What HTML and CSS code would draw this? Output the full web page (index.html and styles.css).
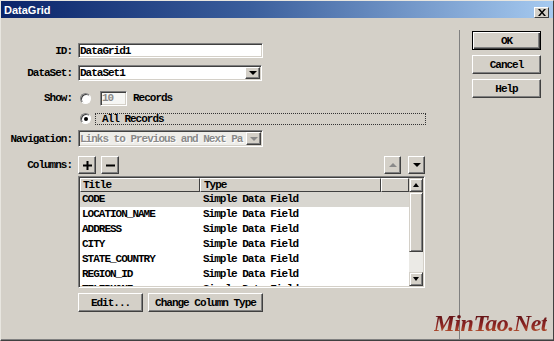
FILE: index.html
```html
<!DOCTYPE html>
<html lang="en">
<head>
  <meta charset="UTF-8" />
  <meta name="viewport" content="width=device-width, initial-scale=1.0" />
  <title>DataGrid</title>
  <link rel="stylesheet" href="styles.css">
</head>
<body>
  <div class="window">
    <div class="titlebar">
      <span class="title">DataGrid</span>
      <span class="close">
        <svg width="8" height="7" viewBox="0 0 8 7"><path d="M0 0h2l2 2.4 2-2.4h2l-3 3.5 3 3.5h-2l-2-2.4-2 2.4h-2l3-3.5z" fill="#000"/></svg>
      </span>
    </div>

    <div class="content">
      <div class="form">
        <div class="row row-id">
          <span class="lbl">ID:</span>
          <div class="field text-field">DataGrid1</div>
        </div>

        <div class="row row-ds">
          <span class="lbl">DataSet:</span>
          <div class="field select">
            <span class="val">DataSet1</span>
            <span class="drop"><i class="tri-down"></i></span>
          </div>
        </div>

        <div class="row row-show">
          <span class="lbl">Show:</span>
          <span class="radio"></span>
          <div class="field num">10</div>
          <span class="records">Records</span>
        </div>

        <div class="row row-all">
          <span class="lbl"></span>
          <span class="radio on"></span>
          <span class="focus">All Records</span>
        </div>

        <div class="row row-nav">
          <span class="lbl">Navigation:</span>
          <div class="field select disabled">
            <span class="val">Links to Previous and Next Pa</span>
            <span class="drop"><i class="tri-down grey"></i></span>
          </div>
        </div>

        <div class="row row-cols">
          <span class="lbl">Columns:</span>
          <div class="tools">
            <div class="tool-group">
              <button class="btn sq">
                <svg width="9" height="9" viewBox="0 0 9 9"><path d="M3.5 0h2v3.5H9v2H5.5V9h-2V5.5H0v-2h3.5z" fill="#000"/></svg>
              </button>
              <button class="btn sq">
                <svg width="9" height="9" viewBox="0 0 9 9"><path d="M0 3.5h9v2H0z" fill="#000"/></svg>
              </button>
            </div>
            <div class="tool-group wide">
              <button class="btn sq"><i class="tri-up grey"></i></button>
              <button class="btn sq"><i class="tri-down"></i></button>
            </div>
          </div>
        </div>

        <div class="row row-list">
          <span class="lbl"></span>
          <div class="list">
            <div class="grid">
              <div class="head">
                <span class="hc c-title">Title</span>
                <span class="hc c-type">Type</span>
                <span class="hc c-fill"></span>
              </div>
              <div class="item sel"><span class="c-title">CODE</span><span class="c-type">Simple Data Field</span></div>
              <div class="item"><span class="c-title">LOCATION_NAME</span><span class="c-type">Simple Data Field</span></div>
              <div class="item"><span class="c-title">ADDRESS</span><span class="c-type">Simple Data Field</span></div>
              <div class="item"><span class="c-title">CITY</span><span class="c-type">Simple Data Field</span></div>
              <div class="item"><span class="c-title">STATE_COUNTRY</span><span class="c-type">Simple Data Field</span></div>
              <div class="item"><span class="c-title">REGION_ID</span><span class="c-type">Simple Data Field</span></div>
              <div class="item"><span class="c-title">TELEPHONE</span><span class="c-type">Simple Data Field</span></div>
            </div>
            <div class="vscroll">
              <span class="sb-btn"><i class="tri-up small"></i></span>
              <span class="thumb"></span>
              <span class="track"></span>
              <span class="sb-btn"><i class="tri-down small"></i></span>
            </div>
          </div>
        </div>

        <div class="row row-btns">
          <span class="lbl"></span>
          <button class="btn edit">Edit...</button>
          <button class="btn change">Change Column Type</button>
        </div>
      </div>

      <div class="side">
        <button class="btn side-btn default">OK</button>
        <button class="btn side-btn">Cancel</button>
        <button class="btn side-btn">Help</button>
      </div>
    </div>

    <div class="watermark">MinTao.Net</div>
  </div>
</body>
</html>
```

FILE: styles.css
```css
* {
  box-sizing: border-box;
}
body {
  margin: 0;
  background: #d4d0c8;
  color: #000;
  font: bold 11px "Liberation Mono", monospace;
  letter-spacing: -1px;
}
.window {
  position: relative;
  width: 554px;
  height: 341px;
  display: flex;
  flex-direction: column;
  overflow: hidden;
  border: 1px solid;
  border-color: #e8e6e0 #404040 #404040 #e8e6e0;
  box-shadow: inset 0 -1px #808080;
}

/* title bar */
.titlebar {
  height: 17px;
  flex: none;
  display: flex;
  align-items: center;
  justify-content: space-between;
  background: linear-gradient(to right, #0a246a, #3a5e9c 45%, #a6caf0);
}
.title {
  padding-left: 3px;
  color: #fff;
  font: bold 11px "Liberation Sans", sans-serif;
  letter-spacing: 0;
}
.close {
  align-self: flex-end;
  width: 15px;
  height: 11px;
  margin: 0 4px 0 0;
  display: flex;
  align-items: center;
  justify-content: center;
  background: #d4d0c8;
  border: 1px solid;
  border-color: #fff #404040 #404040 #fff;
}

.content {
  flex: 1;
  display: flex;
}

/* form */
.form {
  width: 458px;
  flex: none;
  display: flex;
  flex-direction: column;
}
.row {
  display: flex;
  align-items: center;
}
.lbl {
  width: 71px;
  flex: none;
  margin-right: 6px;
  text-align: right;
}
.row-id { margin-top: 25px; height: 15px; }
.row-ds { margin-top: 7px; height: 16px; }
.row-show { margin-top: 9px; height: 16px; }
.row-all { margin-top: 6px; height: 13px; }
.row-nav { margin-top: 5px; height: 17px; }
.row-cols { margin-top: 9px; height: 18px; }
.row-list { margin-top: 2px; height: 112px; }
.row-btns { margin-top: 5px; height: 19px; gap: 5px; }
.row-btns .lbl { margin-right: 1px; }

.field {
  height: 100%;
  background: #fff;
  border: 1px solid;
  border-color: #808080 #fff #fff #808080;
  box-shadow: inset 1px 1px #404040, inset -1px -1px #d4d0c8;
  padding-left: 1px;
  display: flex;
  align-items: center;
  white-space: nowrap;
  overflow: hidden;
}
.text-field {
  width: 185px;
}
.select {
  width: 184px;
  padding-right: 1px;
}
.select .val {
  flex: 1;
  overflow: hidden;
}
.drop {
  width: 15px;
  height: calc(100% - 2px);
  flex: none;
  display: flex;
  align-items: center;
  justify-content: center;
  background: #d4d0c8;
  border: 1px solid;
  border-color: #fff #404040 #404040 #fff;
  box-shadow: inset -1px -1px #808080;
}
.select.disabled {
  width: 185px;
  background: #eeede9;
  color: #8a8a8a;
  text-shadow: 1px 1px #fff;
}
.num {
  width: 27px;
  height: 15px;
  margin-left: 9px;
  color: #8a8a8a;
  background: #f6f6f4;
}
.records {
  margin-left: 6px;
}

.radio {
  width: 11px;
  height: 11px;
  margin-left: 2px;
  flex: none;
  border-radius: 50%;
  background: #fff;
  border: 1px solid;
  border-color: #808080 #fff #fff #808080;
  box-shadow: inset 1px 1px #404040;
  display: flex;
  align-items: center;
  justify-content: center;
}
.radio.on::after {
  content: "";
  width: 4px;
  height: 4px;
  border-radius: 50%;
  background: #000;
}
.focus {
  width: 331px;
  height: 12px;
  margin-left: 4px;
  padding-left: 6px;
  border: 1px dotted #333;
  line-height: 10px;
}

/* triangles */
.tri-down,
.tri-up {
  width: 0;
  height: 0;
  border-left: 4px solid transparent;
  border-right: 4px solid transparent;
}
.tri-down { border-top: 4px solid #000; }
.tri-up { border-bottom: 4px solid #000; }
.tri-down.grey { border-top-color: #8a8a8a; }
.tri-up.grey { border-bottom-color: #8a8a8a; }
.tri-down.small,
.tri-up.small {
  border-left-width: 3.5px;
  border-right-width: 3.5px;
}

/* buttons */
.btn {
  background: #d4d0c8;
  border: 1px solid;
  border-color: #fff #404040 #404040 #fff;
  box-shadow: inset -1px -1px #808080;
  font: inherit;
  letter-spacing: inherit;
  color: #000;
  padding: 0;
  height: 100%;
  display: flex;
  align-items: center;
  justify-content: center;
}
.tools {
  width: 347px;
  height: 100%;
  display: flex;
  justify-content: space-between;
}
.tool-group {
  display: flex;
  gap: 5px;
}
.tool-group.wide {
  gap: 7px;
}
.sq {
  width: 18px;
}
.tool-group.wide .sq {
  width: 17px;
}
.edit { width: 65px; }
.change { width: 115px; }

/* list */
.list {
  width: 347px;
  height: 100%;
  display: flex;
  background: #fff;
  border: 1px solid;
  border-color: #808080 #fff #fff #808080;
  box-shadow: inset 1px 1px #404040, inset -1px -1px #d4d0c8;
  padding: 1px;
  overflow: hidden;
}
.grid {
  flex: 1;
  overflow: hidden;
}
.head {
  display: flex;
  height: 14px;
  background: #d4d0c8;
}
.hc {
  height: 14px;
  padding-left: 2px;
  line-height: 12px;
  border: 1px solid;
  border-color: #fff #404040 #404040 #fff;
}
.c-title {
  width: 120px;
  flex: none;
  padding-left: 2px;
}
.c-type {
  width: 181px;
  flex: none;
  padding-left: 3px;
}
.c-fill {
  flex: 1;
}
.item {
  display: flex;
  height: 15px;
  line-height: 15px;
  white-space: nowrap;
}
.item.sel {
  background: #d8d6d0;
}
.vscroll {
  width: 14px;
  flex: none;
  display: flex;
  flex-direction: column;
}
.sb-btn,
.thumb {
  background: #d4d0c8;
  border: 1px solid;
  border-color: #d4d0c8 #404040 #404040 #d4d0c8;
  box-shadow: inset 1px 1px #fff, inset -1px -1px #808080;
}
.sb-btn {
  height: 14px;
  display: flex;
  align-items: center;
  justify-content: center;
}
.thumb {
  height: 60px;
}
.track {
  flex: 1;
  background: #ebeae6;
}

/* right side */
.side {
  flex: 1;
  margin-top: 12px;
  padding: 1px 0 0 12px;
  border-left: 1px solid #808080;
  display: flex;
  flex-direction: column;
  gap: 5px;
}
.side-btn {
  width: 69px;
  height: 19px;
}
.side-btn.default {
  border-color: #000;
  box-shadow: inset 1px 1px #fff, inset -1px -1px #404040, inset -2px -2px #808080;
}

/* watermark over the dialog */
.watermark {
  position: absolute;
  right: 6px;
  bottom: 3px;
  font: italic bold 24px "Liberation Serif", serif;
  letter-spacing: -0.5px;
  background: linear-gradient(#4a0a10, #8c2422 55%, #c86a34);
  -webkit-background-clip: text;
  background-clip: text;
  color: transparent;
}
```
